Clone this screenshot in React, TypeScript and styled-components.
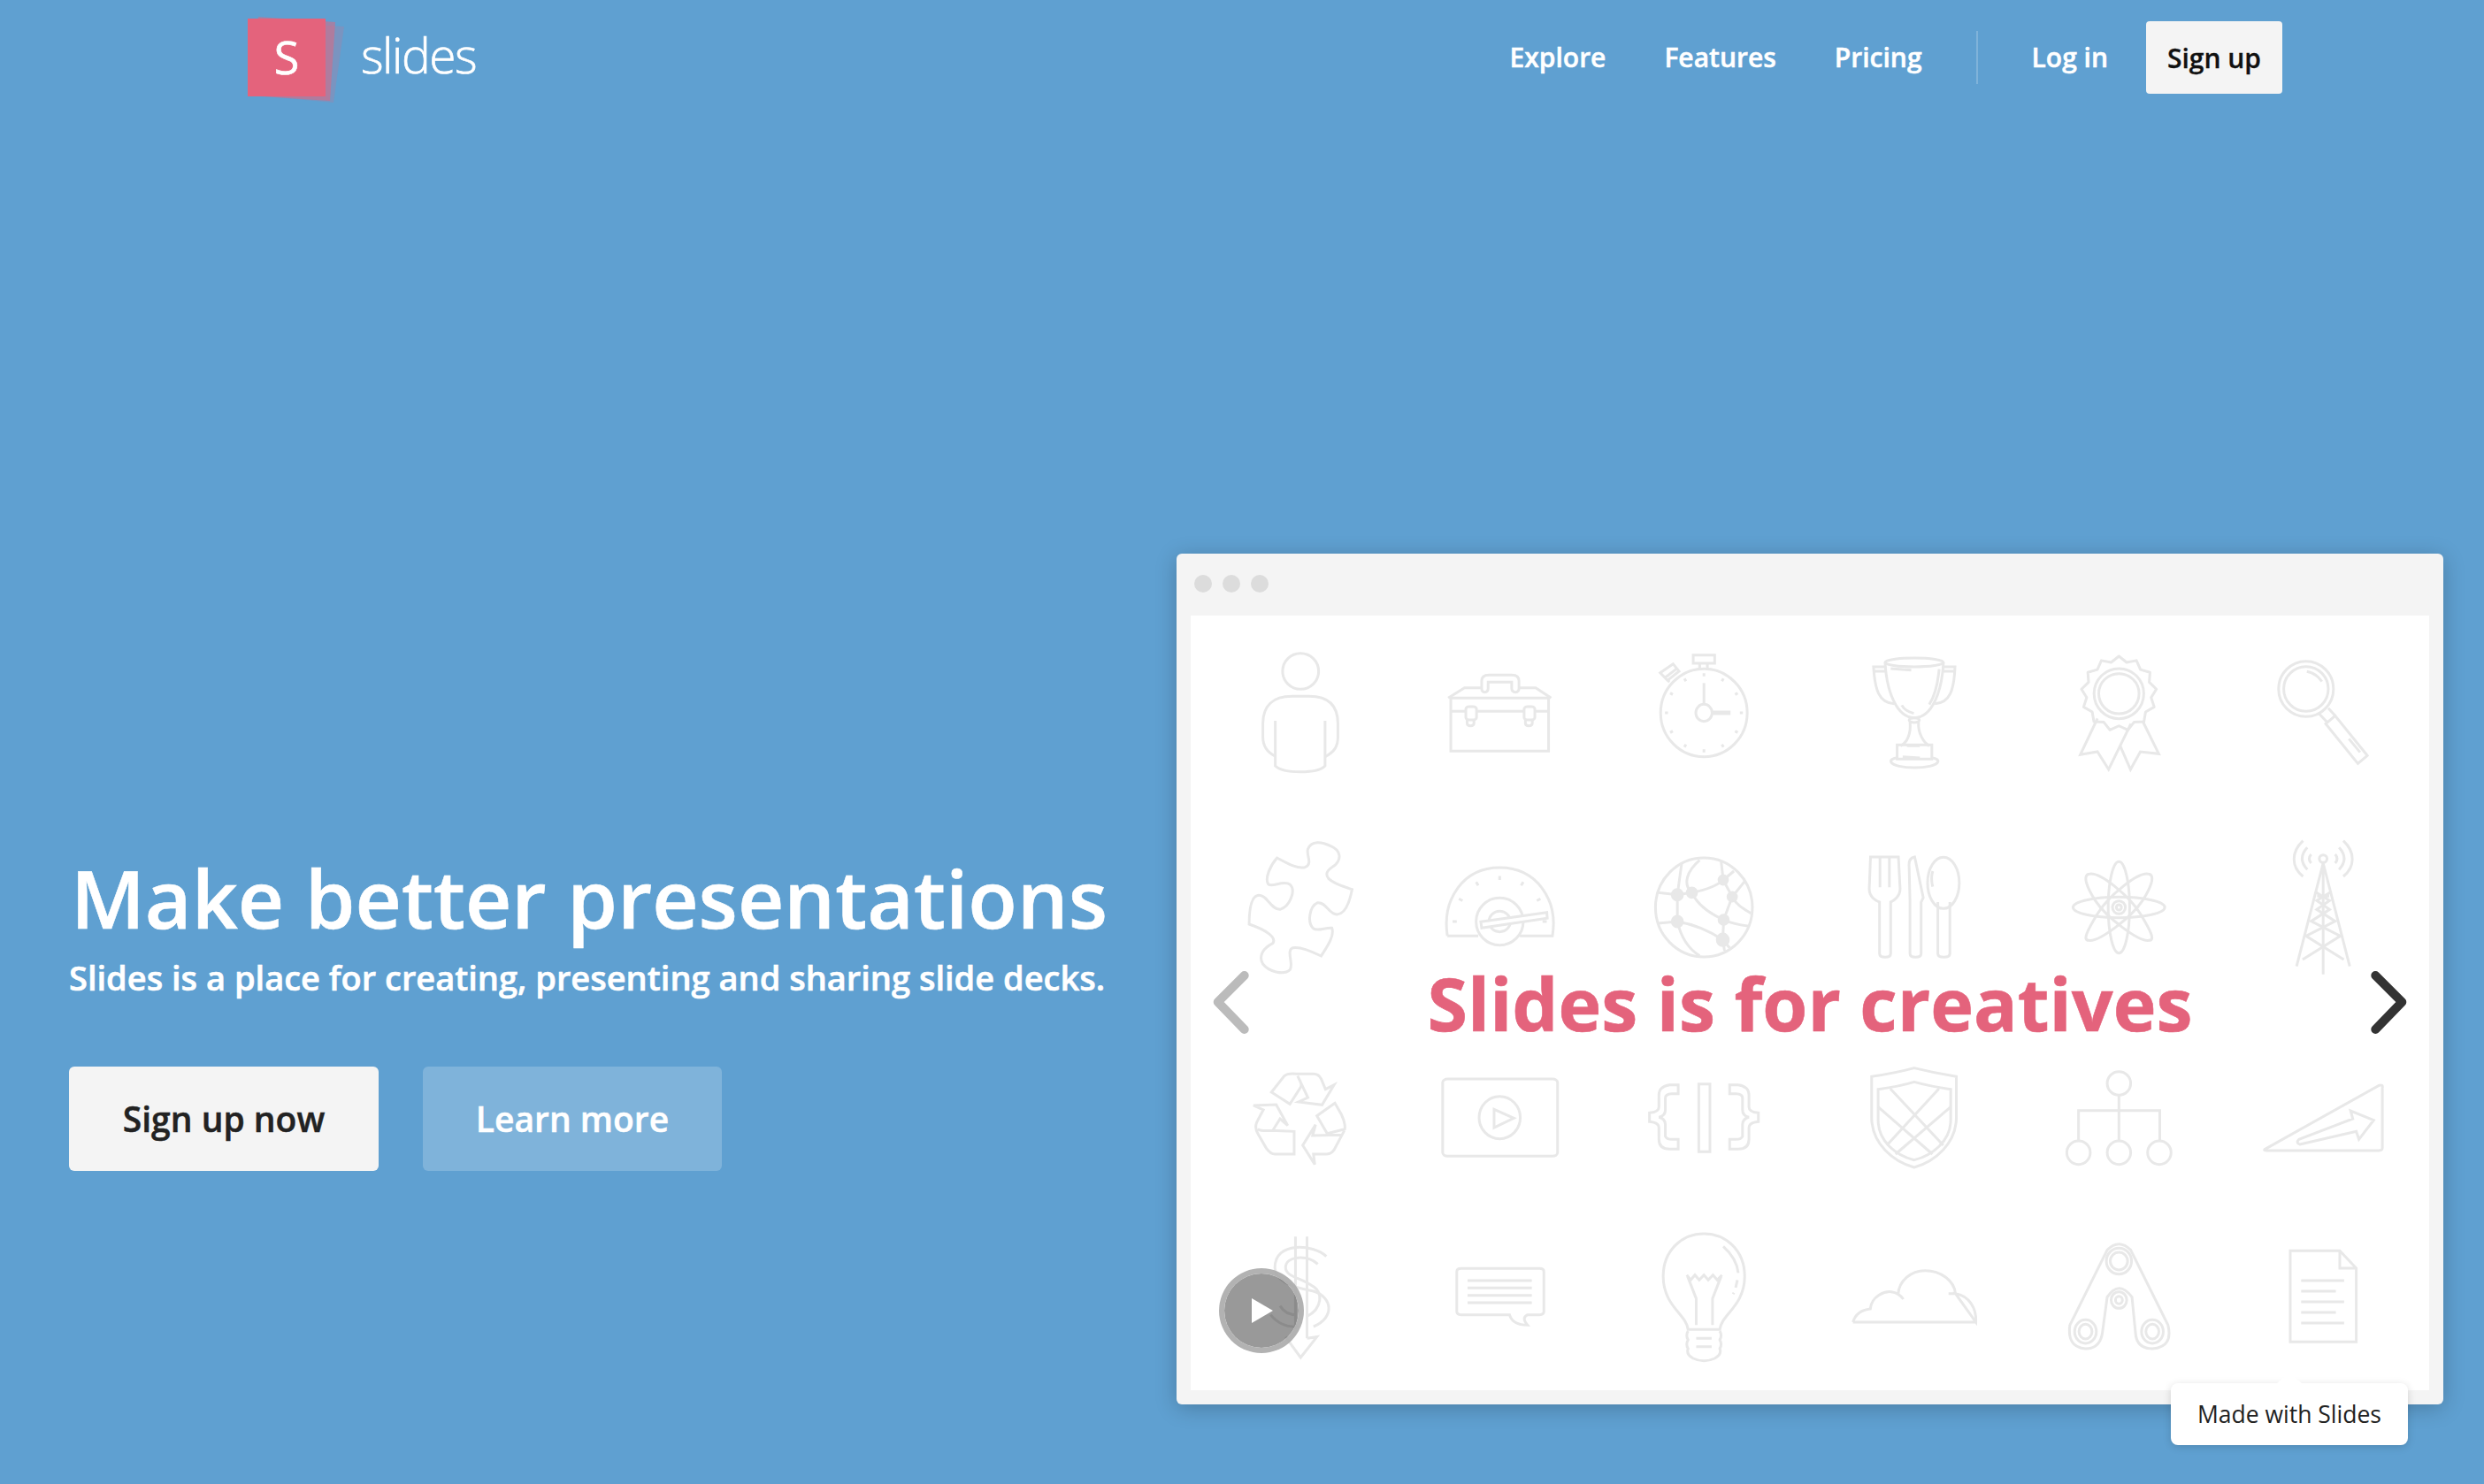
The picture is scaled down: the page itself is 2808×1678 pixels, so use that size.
import React from 'react';
import styled, { createGlobalStyle } from 'styled-components';

const Global = createGlobalStyle`
  html, body { margin: 0; padding: 0; background: #5fa0d1; }
  body { font-family: "Open Sans", "Liberation Sans", sans-serif; -webkit-font-smoothing: antialiased; }
`;

const Page = styled.div`
  width: 2808px; height: 1678px; overflow: hidden;
  background: #5fa0d1; display: flex; flex-direction: column;
`;
const Nav = styled.nav`
  height: 130px; box-sizing: border-box; padding: 24px 228px 0 280px;
  display: flex; justify-content: space-between; align-items: flex-start;
`;
const Brand = styled.a`
  display: flex; align-items: center; height: 90px; margin-top: -4px; gap: 40px;
  color: #fff; text-decoration: none;
`;
const LogoMark = styled.div`
  position: relative; width: 88px; height: 88px; background: #e4637c;
  display: flex; align-items: center; justify-content: center;
  color: #fff; font-size: 52px; font-weight: 400; line-height: 1; -webkit-text-stroke: .7px #fff;
`;
const LogoSheet = styled.svg`
  position: absolute; left: 0; top: -4px; width: 120px; height: 104px; overflow: visible; z-index: 0;
`;
const LogoLetter = styled.span` position: relative; z-index: 1; margin-top: -2px; `;
const LogoFront = styled.div`
  position: absolute; inset: 0; background: #e4637c; z-index: 0;
`;
const BrandName = styled.span`
  font-size: 55px; font-weight: 300; letter-spacing: -1.5px; line-height: 1; margin-top: -7px; -webkit-text-stroke: .7px #fff;
`;
const Links = styled.div` display: flex; align-items: center; height: 82px; `;
const NavLink = styled.a`
  font-size: 30px; font-weight: 600; color: #fff; padding: 0 33px; text-decoration: none;
  -webkit-text-stroke: .5px #fff; margin-top: -2px;
`;
const Divider = styled.span`
  width: 2px; height: 60px; background: rgba(255,255,255,.2); margin: 0 28px;
`;
const NavButton = styled.a`
  width: 154px; height: 82px; margin-left: 10px; border-radius: 4px; background: #f4f4f4;
  color: #111; font-size: 30px; font-weight: 600; display: flex; align-items: center; justify-content: center;
  -webkit-text-stroke: .3px #111;
`;
const Hero = styled.main`
  flex: 1; min-height: 0; display: flex; justify-content: space-between; padding: 496px 46px 90px 78px;
`;
const Copy = styled.section`
  display: flex; flex-direction: column; align-self: flex-end; margin-bottom: 264px;
`;
const Title = styled.h1`
  margin: 0; font-size: 91px; font-weight: 600; line-height: 108px; color: #fff; padding-left: 2px;
  -webkit-text-stroke: .6px #fff;
`;
const Sub = styled.p`
  margin: 10px 0 0; font-size: 38px; font-weight: 600; line-height: 52px; color: #fff;
  -webkit-text-stroke: .6px #fff;
`;
const Actions = styled.div` display: flex; gap: 50px; margin-top: 75px; `;
const Cta = styled.a<{ $ghost?: boolean }>`
  height: 118px; box-sizing: border-box; width: ${p => (p.$ghost ? 338 : 350)}px; border-radius: 6px; padding-bottom: 2px;
  display: flex; align-items: center; justify-content: center; font-size: 39px; font-weight: 600;
  background: ${p => (p.$ghost ? 'rgba(255,255,255,.2)' : '#f4f4f4')};
  color: ${p => (p.$ghost ? '#fff' : '#222')};
  -webkit-text-stroke: .5px ${p => (p.$ghost ? '#fff' : '#222')};
`;
const Browser = styled.section`
  position: relative; width: 1432px; height: 962px; box-sizing: border-box;
  background: #f4f4f4; border-radius: 6px; box-shadow: 0 4px 24px rgba(0,0,0,.22);
  display: flex; flex-direction: column; padding: 0 16px 16px;
`;
const Chrome = styled.div` height: 70px; flex: none; display: flex; align-items: center; gap: 12px; padding-left: 4px; padding-bottom: 2px; box-sizing: border-box; `;
const Dot = styled.span` width: 20px; height: 20px; border-radius: 50%; background: #dcdcdc; `;
const Slide = styled.div`
  position: relative; width: 1400px; height: 876px; background: #fff;
`;
const IconGrid = styled.div`
  display: grid; grid-template-columns: repeat(6, calc(1400px / 6)); grid-template-rows: repeat(4, 219px);
`;
const IconArt = styled.svg`
  width: calc(1400px / 6); height: 219px; overflow: visible; display: block;
  fill: none; stroke: #e8e8e8; stroke-width: 3px;
  & * { vector-effect: non-scaling-stroke; }
`;
const SlideTitle = styled.h2`
  position: absolute; left: 0; right: 0; top: 50%; transform: translateY(-50%); margin: 0; text-align: center;
  font-size: 82.5px; font-weight: 700; color: #e4637c; line-height: 1.2; -webkit-text-stroke: .6px #e4637c;
`;
const Arrow = styled.svg<{ $side: 'left' | 'right' }>`
  position: absolute; top: 400px; ${p => (p.$side === 'left' ? 'left: 24px;' : 'right: 24px;')}
  width: 44px; height: 76px; fill: none; stroke-width: 10px; stroke-linecap: round; stroke-linejoin: round;
  stroke: ${p => (p.$side === 'left' ? '#bbb' : '#333')};
`;
const Play = styled.div`
  position: absolute; left: 32px; top: 738px; width: 96px; height: 96px; box-sizing: border-box; border-radius: 50%;
  background: rgba(0,0,0,.4); border: 6px solid rgba(170,170,170,.9); background-clip: padding-box;
  display: flex; align-items: center; justify-content: center;
`;
const PlayGlyph = styled.svg` width: 24px; height: 28px; fill: #fff; margin-left: 2px; `;
const Badge = styled.div`
  position: absolute; right: 40px; bottom: -46px; width: 268px; height: 70px; border-radius: 8px; background: #fff;
  display: flex; align-items: center; justify-content: center; color: #222; font-size: 26.5px;
  box-shadow: 0 2px 10px rgba(0,0,0,.15);
  &::before {
    content: ''; position: absolute; left: 50%; top: -12px; margin-left: -14px;
    border-left: 14px solid transparent; border-right: 14px solid transparent; border-bottom: 12px solid #fff;
  }
`;

type Z = 'A' | 'B' | 'C' | 'D';
const frames: Record<Z, { ox: number; oy: number; sx: number }> = {
  A: { ox: 1320, oy: 610, sx: 2.0632 },
  B: { ox: 2020, oy: 680, sx: 2.0632 },
  C: { ox: 1320, oy: 1170, sx: 2.0632 },
  D: { ox: 2020, oy: 1170, sx: 2.0364 },
};
const CW = 1400 / 6, CH = 876 / 4;

const Cell = ({ z, i, children }: { z: Z; i: number; children: React.ReactNode }) => {
  const f = frames[z];
  const col = i % 6, row = Math.floor(i / 6);
  const x = (1346 + col * CW - f.ox) * f.sx, y = (696 + row * CH - f.oy) * 3;
  return (
    <IconArt viewBox={`${x} ${y} ${CW * f.sx} ${CH * 3}`} preserveAspectRatio="none">
      {children}
    </IconArt>
  );
};

const ticks = (cx: number, cy: number, rx: number, ry: number, n: number, a: number, b: number, from = 0, to = 360) =>
  Array.from({ length: n }, (_, k) => {
    const t = ((from + (k * (to - from)) / (n === 1 ? 1 : to - from === 360 ? n : n - 1)) * Math.PI) / 180;
    const s = Math.sin(t), c = Math.cos(t);
    return `M${cx + rx * a * s} ${cy - ry * a * c}L${cx + rx * b * s} ${cy - ry * b * c}`;
  }).join('');

const burst = (cx: number, cy: number, rx: number, ry: number, n: number) => {
  let d = '';
  for (let k = 0; k < n * 2; k++) {
    const t = (k * Math.PI) / n;
    const m = k % 2 === 0 ? 1 : 0.86;
    d += `${k === 0 ? 'M' : 'L'}${cx + rx * m * Math.sin(t)} ${cy - ry * m * Math.cos(t)}`;
  }
  return d + 'Z';
};

const E = ({ x, y, rx, ry, f }: { x: number; y: number; rx: number; ry: number; f?: boolean }) => (
  <ellipse cx={x} cy={y} rx={rx} ry={ry} fill={f ? '#e8e8e8' : undefined} />
);

const icons: { z: Z; art: React.ReactNode }[] = [
  { z: 'A', art: <>
    <E x={310} y={447} rx={42} ry={61} />
    <path d="M250 735C230 720 222 700 222 670L222 625C222 565 245 532 290 532L330 532C375 532 397 565 397 625L397 670C397 700 390 720 367 737" />
    <path d="M251 615L251 768C270 795 350 795 367 768L367 615" />
  </> },
  { z: 'A', art: <>
    <rect x={661} y={538} width={228} height={180} />
    <path d="M655 538L693 503L733 503M820 503L859 503L895 538" />
    <path d="M733 505V480Q733 460 750 460H803Q820 460 820 480V505Q820 518 812 518Q803 518 803 505V484H748V505Q748 518 740 518Q733 518 733 505" />
    <path d="M661 583H695M720 583H832M857 583H889" />
    <rect x={696} y={567} width={25} height={45} rx={8} />
    <rect x={832} y={567} width={25} height={45} rx={8} />
    <path d="M699 612v12q0 8 8 8q8 0 8 -8v-12M835 612v12q0 8 8 8q8 0 8 -8v-12" />
  </> },
  { z: 'A', art: <>
    <E x={1250} y={588} rx={101} ry={149} />
    <rect x={1225} y={392} width={50} height={28} />
    <path d="M1240 420V440M1258 420V440" />
    <path d="M1148 452L1178 422L1192 447L1165 478ZM1160 468L1185 440M1170 483L1165 478" />
    <path d={ticks(1250, 588, 101, 149, 12, 0.83, 0.9)} />
    <path d="M1250 487V558" />
    <E x={1250} y={588} rx={19} ry={29} />
    <path d="M1270 588H1312" strokeWidth={5} />
  </> },
  { z: 'B', art: <>
    <E x={297} y={207} rx={68} ry={15} />
    <path d="M229 207C232 300 255 395 297 395C340 395 362 300 365 207" />
    <E x={297} y={403} rx={12} ry={8} />
    <path d="M287 408C290 450 280 480 265 490M307 408C305 450 320 480 332 490" />
    <path d="M257 487H338V535H257Z" />
    <path d="M257 530Q240 535 243 545C250 570 345 570 352 545Q355 535 338 530M270 527L310 531M280 490H310" />
    <path d="M229 222H202C205 300 215 345 250 347M365 222H392C390 300 380 345 345 347M203 237H230M365 237H392" />
    <path d="M242 228L290 233M355 230C352 280 345 320 332 350M268 352Q275 372 296 380" />
  </> },
  { z: 'B', art: <>
    <path d={burst(775, 313, 88, 127, 13)} strokeLinejoin="round" />
    <E x={775} y={313} rx={58} ry={85} />
    <E x={775} y={313} rx={47} ry={68} />
    <path d="M725 397L685 520L725 510L751 570L803 415M830 405L868 517L825 510L802 570L778 490" />
  </> },
  { z: 'B', art: <>
    <E x={1210} y={297} rx={64} ry={94} />
    <E x={1210} y={297} rx={52} ry={76} />
    <path d="M1212 238Q1235 245 1247 272" />
    <path d="M1240 380L1258 408M1262 362L1278 388" />
    <path d="M1256 415L1278 388L1353 523L1331 550Z" />
    <path d="M1310 466L1336 512" />
  </> },

  { z: 'A', art: <path d="M255 1080C275 1095 300 1118 320 1112C340 1100 322 1070 327 1050C335 1020 360 1025 380 1040C405 1055 405 1085 390 1105C375 1120 365 1130 375 1150C385 1165 410 1178 430 1187C425 1225 415 1270 395 1272C375 1270 370 1230 350 1232C330 1245 325 1300 340 1320C350 1330 370 1315 383 1318C390 1345 370 1385 358 1413C340 1400 310 1380 292 1385C275 1395 295 1440 285 1460C270 1480 235 1465 222 1440C210 1410 225 1385 245 1370C255 1350 230 1325 190 1305C190 1270 192 1210 212 1207C232 1205 240 1255 262 1255C285 1245 300 1190 285 1170C270 1155 245 1180 235 1170C225 1150 240 1105 255 1080Z" /> },
  { z: 'A', art: <>
    <path d="M653 1345C640 1220 690 1113 775 1113C860 1113 912 1220 898 1345H822M653 1345H725" />
    <path d={ticks(775, 1296, 122, 172, 7, 0.82, 0.9, -90, 90)} />
    <E x={775} y={1296} rx={55} ry={80} />
    <E x={775} y={1296} rx={25} ry={35} />
    <path d="M731 1297L885 1265L886 1285L733 1318Z" fill="#fff" />
  </> },
  { z: 'A', art: <>
    <E x={1250} y={1248} rx={113} ry={168} />
    <path d="M1198 1100L1188 1205M1240 1088C1210 1125 1200 1170 1222 1198M1188 1205V1296M1143 1198L1188 1205L1222 1198C1250 1190 1280 1175 1295 1155L1320 1125M1290 1090L1295 1155L1316 1212L1296 1290L1294 1358L1298 1395M1316 1212L1345 1160M1316 1212C1325 1240 1345 1255 1360 1268M1222 1198C1235 1240 1265 1270 1296 1290C1310 1300 1335 1308 1355 1312M1143 1302L1188 1296C1225 1305 1265 1330 1294 1358L1310 1385M1188 1296C1195 1340 1210 1385 1240 1412" />
    <E x={1188} y={1205} rx={12} ry={18} f /><E x={1222} y={1198} rx={11} ry={16} f /><E x={1295} y={1155} rx={10} ry={15} f />
    <E x={1316} y={1212} rx={10} ry={15} f /><E x={1296} y={1290} rx={11} ry={16} f /><E x={1188} y={1296} rx={12} ry={18} f /><E x={1294} y={1358} rx={13} ry={20} f />
  </> },
  { z: 'B', art: <>
    <path d="M195 867H260L264 975C264 1000 250 1015 242 1020V1195Q242 1207 229 1207Q216 1207 216 1195V1020C205 1015 192 1000 192 975ZM217 867V970M239 867V970" />
    <path d="M298 867C285 870 284 885 285 900L287 1015V1195Q287 1207 300 1207Q313 1207 313 1195V1020L318 1005Z" />
    <E x={365} y={955} rx={37} ry={87} />
    <path d="M352 1020V1195Q352 1207 366 1207Q380 1207 380 1195V1020M340 915Q335 940 340 968" />
  </> },
  { z: 'B', art: <>
    <E x={775} y={1038} rx={107} ry={35} />
    <E x={775} y={1038} rx={25} ry={155} />
    <path d="M705 925C730 915 800 1000 825 1060C850 1120 860 1150 845 1150C820 1155 745 1070 720 1015C700 970 690 930 705 925Z" />
    <path d="M845 925C820 915 750 1000 725 1060C700 1120 690 1150 705 1150C730 1155 805 1070 830 1015C850 970 860 930 845 925Z" />
    <E x={775} y={1038} rx={15} ry={22} />
    <E x={775} y={1038} rx={6} ry={9} />
  </> },
  { z: 'B', art: <>
    <E x={1250} y={873} rx={9} ry={13} />
    <path d="M1250 888L1188 1238M1250 888L1312 1238M1250 888V1265" />
    <path d="M1231 985L1265 1015L1235 1045L1278 1085L1210 1135L1298 1215M1269 985L1235 1015L1265 1045L1222 1085L1290 1135L1202 1215M1236 1000H1264" />
    <path d="M1203 812C1175 850 1175 900 1203 933M1213 835C1197 860 1197 885 1213 910M1222 858Q1213 873 1222 888M1297 812C1325 850 1325 900 1297 933M1287 835C1303 860 1303 885 1287 910M1278 858Q1287 873 1278 888" />
  </> },

  { z: 'C', art: <>
    <path d="M242 195L272 140Q280 130 300 133L340 133Q352 133 358 150L368 185L388 170L360 238L305 228L327 213L303 140Q315 170 310 178L285 235Z" />
    <path d="M200 240L253 237L280 308L262 285L245 325L295 328V405H250Q240 405 230 385L212 340Q200 315 210 290L223 255ZM210 320Q218 328 245 325" />
    <path d="M390 232L348 275L372 335L413 320Q415 300 405 270Z" />
    <path d="M345 305L315 375L343 440L340 405H370Q385 405 392 380L412 325M345 305L338 342L405 340" />
  </> },
  { z: 'C', art: <>
    <rect x={642} y={150} width={268} height={262} rx={12} />
    <E x={775} y={281} rx={48} ry={72} />
    <path d="M762 253L808 283L762 315Z" />
  </> },
  { z: 'C', art: <>
    <path d="M1190 170H1170Q1145 175 1145 205V245Q1145 262 1123 265V295Q1145 298 1145 315V355Q1145 388 1170 388H1190V355H1175Q1163 355 1160 345V305Q1160 285 1145 280Q1160 275 1160 255V215Q1160 200 1175 200H1190Z" />
    <path d="M1310 170H1330Q1355 175 1355 205V245Q1355 262 1377 265V295Q1355 298 1355 315V355Q1355 388 1330 388H1310V355H1325Q1337 355 1340 345V305Q1340 285 1355 280Q1340 275 1340 255V215Q1340 200 1325 200H1310Z" />
    <rect x={1238} y={167} width={26} height={230} />
  </> },
  { z: 'D', art: <>
    <path d="M195 142Q250 130 293 113Q340 130 390 142V280C390 370 340 430 293 450C245 430 195 370 195 280Z" />
    <path d="M210 185Q260 175 293 160Q330 175 377 185V290C377 360 335 410 293 425C250 410 210 360 210 290Z" />
    <path d="M238 183L360 375M350 183L230 375M210 245L335 405M377 245L250 405" />
  </> },
  { z: 'D', art: <>
    <E x={765} y={165} rx={27} ry={40} />
    <path d="M765 205V360M672 360V257H859V360" />
    <E x={672} y={400} rx={27} ry={40} /><E x={765} y={400} rx={27} ry={40} /><E x={858} y={400} rx={27} ry={40} />
  </> },
  { z: 'D', art: <>
    <path d="M1100 388L1362 172Q1372 168 1370 180V385Q1370 393 1360 393H1105Q1095 393 1100 388Z" />
    <path d="M1180 372L1310 328L1316 355L1350 290L1297 258L1302 285L1178 355Q1170 365 1180 372Z" />
  </> },

  { z: 'C', art: <>
    <path d="M298 685V1000M325 685V1030M275 1025L310 1095L348 1025L325 1030" />
    <path d="M370 752C340 710 250 700 250 790C250 840 300 860 340 870C385 890 390 960 340 990" />
    <path d="M350 778C325 745 275 750 275 790C275 820 310 825 335 850C365 870 360 930 325 955" />
    <path d="M262 920Q275 950 300 950M240 950Q265 995 305 990" />
  </> },
  { z: 'C', art: <>
    <path d="M685 793H868Q878 793 878 803V940Q878 950 868 950H840Q825 960 840 985Q805 985 798 950H685Q675 950 675 940V803Q675 793 685 793Z" />
    <path d="M700 834H850M700 859H850M700 884H850M700 909H850" />
  </> },
  { z: 'C', art: <>
    <path d="M1213 1000C1210 950 1155 920 1155 820C1155 730 1200 675 1250 675C1300 675 1345 730 1345 820C1345 920 1290 950 1287 1000Z" />
    <path d="M1295 718C1320 750 1328 780 1330 808M1328 832L1324 858M1320 875L1318 880" />
    <path d="M1210 815L1219 832L1229 815L1239 832L1250 815L1260 832L1271 815L1281 832L1292 815M1212 820L1232 895V985M1290 820L1270 895V985" />
    <path d="M1213 1005Q1207 1020 1213 1035Q1207 1050 1213 1065Q1208 1085 1225 1098Q1250 1115 1275 1098Q1292 1085 1287 1065Q1293 1050 1287 1035Q1293 1020 1287 1005M1232 1030H1268M1232 1058H1268" />
  </> },
  { z: 'D', art: <path d="M152 975Q160 935 192 930C195 885 225 870 240 872Q258 875 268 897M256 880C258 835 285 800 318 800C355 800 385 835 388 878H372M388 878C420 885 437 930 435 975ZM152 975H435" /> },
  { z: 'D', art: <>
    <path d="M738 730Q765 690 792 730L878 985Q890 1060 842 1065Q805 1065 803 1010L795 890Q765 830 738 890L727 1010Q722 1065 688 1065Q645 1060 652 985Z" />
    <E x={765} y={768} rx={20} ry={30} /><E x={765} y={768} rx={29} ry={44} />
    <E x={688} y={1007} rx={25} ry={40} /><E x={688} y={1007} rx={15} ry={25} />
    <E x={842} y={1007} rx={25} ry={40} /><E x={842} y={1007} rx={15} ry={25} />
    <E x={765} y={900} rx={18} ry={28} /><E x={765} y={900} rx={8} ry={13} />
  </> },
  { z: 'D', art: <>
    <path d="M1158 733H1272L1310 792V1042H1158ZM1272 733V792H1310" />
    <path d="M1183 834H1282M1183 906H1282M1183 978H1282M1183 870H1263M1183 942H1263" />
  </> },
];

export default function App() {
  return (
    <Page>
      <Global />
      <Nav>
        <Brand>
          <LogoMark>
            <LogoSheet viewBox="0 0 120 104">
              <polygon points="30,8 109,13 97,99 10,91" fill="#e4637c" opacity=".2" />
              <polygon points="12,2 99,8 93,97 0,91" fill="#e4637c" opacity=".5" />
            </LogoSheet>
            <LogoFront />
            <LogoLetter>S</LogoLetter>
          </LogoMark>
          <BrandName>slides</BrandName>
        </Brand>
        <Links>
          <NavLink>Explore</NavLink>
          <NavLink>Features</NavLink>
          <NavLink>Pricing</NavLink>
          <Divider />
          <NavLink>Log in</NavLink>
          <NavButton>Sign up</NavButton>
        </Links>
      </Nav>
      <Hero>
        <Copy>
          <Title>Make better presentations</Title>
          <Sub>Slides is a place for creating, presenting and sharing slide decks.</Sub>
          <Actions>
            <Cta>Sign up now</Cta>
            <Cta $ghost>Learn more</Cta>
          </Actions>
        </Copy>
        <Browser>
          <Chrome><Dot /><Dot /><Dot /></Chrome>
          <Slide>
            <IconGrid>
              {icons.map((ic, i) => <Cell key={i} z={ic.z} i={i}>{ic.art}</Cell>)}
            </IconGrid>
            <SlideTitle>Slides is for creatives</SlideTitle>
            <Arrow $side="left" viewBox="0 0 44 76"><path d="M36.7 7L6.7 37L36.7 68" /></Arrow>
            <Arrow $side="right" viewBox="0 0 44 76"><path d="M7.3 7L37.3 37L7.3 68" /></Arrow>
            <Play><PlayGlyph viewBox="0 0 24 28"><path d="M0 0L24 14L0 28Z" /></PlayGlyph></Play>
          </Slide>
          <Badge>Made with Slides</Badge>
        </Browser>
      </Hero>
    </Page>
  );
}
